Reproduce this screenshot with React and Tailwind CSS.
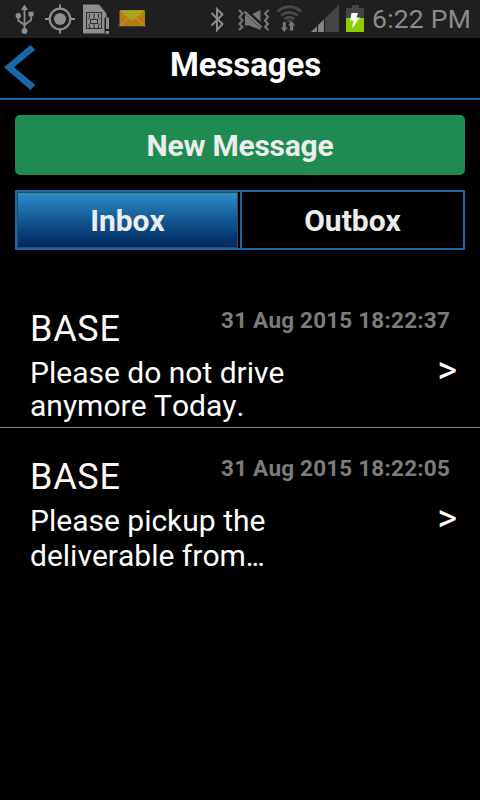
import * as React from "react";

const messages = [
  {
    id: 1,
    from: "BASE",
    date: "31 Aug 2015 18:22:37",
    lines: ["Please do not drive", "anymore Today."],
    leading: "pt-px leading-[33px]",
  },
  {
    id: 2,
    from: "BASE",
    date: "31 Aug 2015 18:22:05",
    lines: ["Please pickup the", "deliverable from"],
    truncated: true,
    leading: "leading-[35px]",
  },
];

function StatusIcons() {
  return (
    <svg width="366" height="38" viewBox="0 0 366 38" fill="none">
      {/* usb */}
      <g stroke="#8e8e8e" strokeWidth="1.800">
        <path d="M24.500 8v22M18.300 17v3.500l6.200 4.500M31 16v4l-6.500 5" />
      </g>
      <g fill="#8e8e8e">
        <path d="M24.500 4.500l3.500 5.500h-7z" />
        <circle cx="18.300" cy="15.700" r="2.700" />
        <rect x="28.500" y="11.700" width="5" height="4.600" />
        <circle cx="24.500" cy="31" r="2.900" />
      </g>
      {/* gps */}
      <circle cx="60" cy="19" r="10.300" stroke="#8e8e8e" strokeWidth="2.200" />
      <circle cx="60" cy="19" r="6" fill="#8e8e8e" />
      <path
        d="M60 4.500v5M60 28.500v5M45 19h5M70 19h5"
        stroke="#8e8e8e"
        strokeWidth="2"
      />
      {/* sim card */}
      <path d="M83 4.500h16l7.500 9v3.500l-1.500 1v15.500h-22z" fill="#8e8e8e" />
      <path d="M105 17.500v16" stroke="#1f1f1f" />
      <rect x="106" y="17.500" width="3" height="11.500" fill="#8e8e8e" />
      <rect x="105.500" y="31" width="3.500" height="2.800" fill="#8e8e8e" />
      <g stroke="#303030">
        <rect x="86.500" y="12.500" width="15" height="16" />
        <rect x="90.500" y="19.500" width="7" height="4" />
        <path d="M89.500 14v3.500l-1.500 2M94 14v5M98.500 14v3.500l1.500 2M89.500 28.500v-3l-1.500-2M94 28.500v-5M98.500 28.500v-3l1.500-2" />
      </g>
      {/* envelope */}
      <rect x="118" y="24.500" width="28" height="2.200" rx="1" fill="#4a4a4a" />
      <rect x="119.500" y="10" width="25.500" height="16" rx="1.500" fill="#b47d14" />
      <path d="M120 25.500l8.500-7.500M144.500 25.500l-8.500-7.500" stroke="#c89a4a" />
      <path d="M120 10.500h24.500l-10.500 8.700q-1.700 1-3.500 0z" fill="#aca61a" />
      <path d="M120 11l10.500 8.500q1.800 1 3.600 0l10.400-8.500" stroke="#b98d2c" />
      {/* bluetooth */}
      <path
        d="M211.500 13l11 11-5.500 6V9l5.500 5.500-11 11"
        stroke="#8e8e8e"
        strokeWidth="1.900"
      />
      {/* vibrate */}
      <g stroke="#777" strokeWidth="2">
        <path d="M239 10l3.500 3.500-3 3.500 3 3.500-3 3.500 3 3-3.500 3M268.500 10l-3.500 3.500 3 3.500-3 3.500 3 3.500-3 3 3.500 3" />
      </g>
      <path d="M245 15v10.500h4.500l11 4.500v-20l-10 5z" fill="#777" />
      <path d="M245 10.500l17 16" stroke="#1f1f1f" strokeWidth="5" />
      <path d="M244.500 11.500l17 16" stroke="#777" strokeWidth="2.400" />
      {/* wifi */}
      <g stroke="#494949" strokeWidth="2.800">
        <path d="M277.500 11.500q11.800-9.500 23.600 0M281 15.500q8.300-6.500 16.600 0M284.500 19q4.800-3.500 9.600 0" />
      </g>
      <path d="M286.300 20.500q3-1.500 6 0l-3 2.500z" fill="#494949" />
      <path
        d="M282.800 22h3v5.500h2l-3.500 4.500-3.500-4.500h2zM290 30.500v-5h-2l3.500-4.500 3.800 4.500h-2v5z"
        fill="#777"
      />
      {/* signal */}
      <path d="M311 32L339 4.500V32z" fill="#444" />
      <path d="M311 32L325 18.500V32z" fill="#858585" />
      <path d="M317.500 24v8M324.500 17v15" stroke="#1f1f1f" strokeWidth="1.200" />
      {/* battery */}
      <path d="M346 8h6V5h7v3h5v10h-18z" fill="#444" />
      <rect x="346" y="18" width="18" height="14" fill="#8fcd04" />
      <path d="M351.500 13h6.500l-1.500 4.500h3.500l-8 11 1.500-8h-3.500z" fill="#fff" />
    </svg>
  );
}

function MessageRow({ message }) {
  const last = message.lines.length - 1;

  return (
    <li className="h-[148px] border-b border-[#858585] pl-[30px] last:border-0">
      <div className="flex justify-between pr-[30px]">
        <div className="pt-[28px] text-[36px] leading-[42px] tracking-[0.700px] text-[#fff8f5]">
          {message.from}
        </div>
        <div className="pt-[26px] text-[22.500px] leading-[28px] font-bold tracking-[0.200px] text-[#7c7c7c]">
          {message.date}
        </div>
      </div>
      <div className="flex justify-between pt-[5px] pr-[23px]">
        <div className={"text-[30px] " + message.leading}>
          {message.lines.map((line, i) => (
            <div key={line} className="whitespace-nowrap">
              {line}
              {message.truncated && i === last && (
                <span className="tracking-[-2.200px]">...</span>
              )}
            </div>
          ))}
        </div>
        <div className="text-[38px] leading-[30px] text-[#fff8f5]">&gt;</div>
      </div>
    </li>
  );
}

export default function Messages() {
  const [tab, setTab] = React.useState("inbox");

  return (
    <div className="h-[800px] w-[480px] overflow-hidden bg-black font-['Roboto',sans-serif] text-white [font-kerning:none]">
      <div className="flex h-[38px] bg-[#1f1f1f] text-[#8c8c8c]">
        <StatusIcons />
        <div className="flex-1 pr-[9px] text-right text-[26.500px] leading-[38px] tracking-[0.200px] whitespace-nowrap">
          6:22 PM
        </div>
      </div>
      <header className="flex h-[62px] items-start border-b-2 border-[#1769aa]">
        <button type="button" className="w-[45px]">
          <svg width="45" height="60" viewBox="0 0 45 60">
            <path
              d="M30.500 7l4.700 4.700L14 29.300l21.200 17.500-4.700 5.200L4 29.300z"
              fill="#1769aa"
            />
          </svg>
        </button>
        <h1 className="flex-1 pr-[34px] text-center text-[33px] leading-[54px] font-bold tracking-[-0.100px]">
          Messages
        </h1>
      </header>
      <div className="px-[15px] pt-[15px] text-[30px] font-bold text-[#ececec]">
        <button
          type="button"
          className="block h-[60px] w-full rounded-[5px] bg-[#1f8a52] tracking-[-0.250px]"
        >
          New Message
        </button>
        <div className="mt-[15px] flex h-[60px] border-2 border-[#1769aa]">
          <button
            type="button"
            className="w-[225px] border-r-2 border-[#1769aa] pr-[2px]"
            onClick={() => setTab("inbox")}
          >
            <span
              className={
                "flex h-full items-center justify-center border " +
                (tab === "inbox"
                  ? "border-[#35495c] bg-linear-to-b from-[#2d8dcb] to-[#02265c]"
                  : "border-transparent")
              }
            >
              Inbox
            </span>
          </button>
          <button
            type="button"
            className="flex-1"
            onClick={() => setTab("outbox")}
          >
            Outbox
          </button>
        </div>
      </div>
      <ul className="pt-[30px]">
        {messages.map((message) => (
          <MessageRow key={message.id} message={message} />
        ))}
      </ul>
    </div>
  );
}
